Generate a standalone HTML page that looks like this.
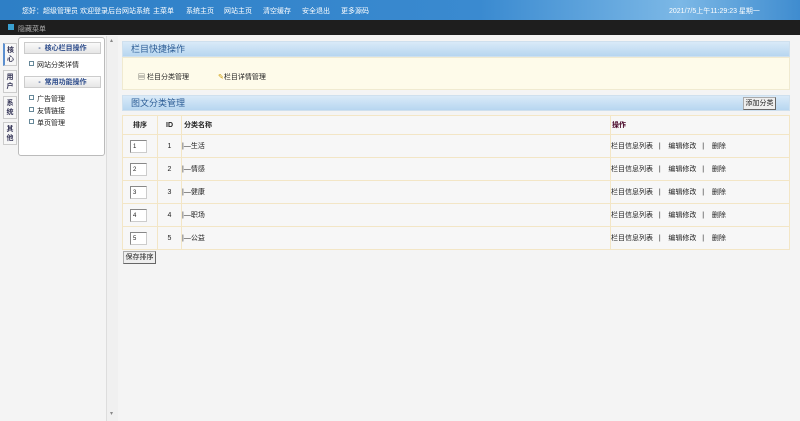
<!DOCTYPE html>
<html><head><meta charset="utf-8"><style>
*{margin:0;padding:0;box-sizing:border-box}
body{width:800px;height:421px;overflow:hidden;background:#f4f4f4;font-family:"Liberation Sans","Noto Sans CJK SC",sans-serif;font-size:7px;color:#222;position:relative}
.abs{position:absolute}
#top{left:0;top:0;width:800px;height:20px;background:linear-gradient(90deg,#2e7fc6 0%,#3a8ad0 60%,#7cb8e6 85%,#3f8ccf 100%);color:#fff}
#top span{position:absolute;top:6px;font-size:7px;white-space:nowrap}
#bar{left:0;top:20px;width:800px;height:15px;background:#1e1e1e;color:#aaa}
.tab{left:3px;width:14px;height:23px;background:#f7f7f7;border:1px solid #ccc;color:#335;font-size:7px;line-height:9px;text-align:center;padding-top:2px;font-weight:bold}
#menu{left:18px;top:37px;width:87px;height:119px;background:#fff;border:1px solid #bbb;border-radius:3px}
.mh{position:absolute;left:5px;width:77px;height:12px;background:linear-gradient(#fafafa,#e6e6e6);border:1px solid #ccc;color:#2b4a8a;font-weight:bold;text-align:center;line-height:11px}
.mi{position:absolute;left:10px;white-space:nowrap}
.mi:before{content:"";display:inline-block;width:3px;height:3px;border:1px solid #689;margin-right:3px;vertical-align:1px}
#scroll{left:106px;top:36px;width:12px;height:385px;background:#f0f0f0;border-left:1px solid #ddd}
.ph{left:122px;width:668px;height:16px;background:linear-gradient(#d9eaf8,#b7d6f0);border:1px solid #cfe0ee;color:#2b5c95;font-size:9px;line-height:15px;padding-left:8px}
table{position:absolute;left:122px;top:115px;width:668px;border-collapse:collapse;background:#f7f7f7}
td{border:1px solid #f3e6c6;height:23px;font-size:7px}
tr.h td{height:19px;font-weight:bold}
.in{display:inline-block;width:17px;height:13px;border:1px solid #888;border-right-color:#ccc;border-bottom-color:#ccc;background:#fff;font-size:6px;padding:3px 2px;vertical-align:middle}
.btn{background:#eee;border:1px solid #aaa;border-right-color:#666;border-bottom-color:#666;font-size:7px;text-align:center;line-height:11px}
</style></head><body>
<div id="top" class="abs">
<span style="left:22px">您好：超级管理员 欢迎登录后台网站系统</span>
<span style="left:153px">主菜单</span><span style="left:186px">系统主页</span><span style="left:224px">网站主页</span><span style="left:263px">清空缓存</span><span style="left:302px">安全退出</span><span style="left:341px">更多源码</span>
<span style="left:669px">2021/7/5上午11:29:23 星期一</span>
</div>
<div id="bar" class="abs"><div class="abs" style="left:8px;top:4px;width:6px;height:6px;background:#3aa0d0"></div><span class="abs" style="left:18px;top:4px;font-size:7px">隐藏菜单</span></div>
<div class="abs tab" style="top:43px;border-left:2px solid #5b8fd0">核<br>心</div>
<div class="abs tab" style="top:70px">用<br>户</div>
<div class="abs tab" style="top:96px">系<br>统</div>
<div class="abs tab" style="top:122px">其<br>他</div>
<div id="menu" class="abs">
<div class="mh" style="top:4px">- &nbsp;核心栏目操作</div>
<div class="mi" style="top:22px">网站分类详情</div>
<div class="mh" style="top:38px">- &nbsp;常用功能操作</div>
<div class="mi" style="top:56px">广告管理</div>
<div class="mi" style="top:68px">友情链接</div>
<div class="mi" style="top:80px">单页管理</div>
</div>
<div id="scroll" class="abs"><span class="abs" style="left:3px;top:1px;font-size:6px;color:#888">▴</span><span class="abs" style="left:3px;top:374px;font-size:6px;color:#888">▾</span></div>
<div class="abs ph" style="top:41px">栏目快捷操作</div>
<div class="abs" style="left:122px;top:57px;width:668px;height:33px;background:#fefbea;border:1px solid #f0ead0">
<span class="abs" style="left:15px;top:14px">▤ 栏目分类管理</span><span class="abs" style="left:95px;top:14px"><span style="color:#c90">✎</span>栏目详情管理</span></div>
<div class="abs ph" style="top:95px">图文分类管理</div>
<div class="abs btn" style="left:743px;top:97px;width:33px;height:13px">添加分类</div>
<table>
<tr class="h"><td style="width:35px;text-align:center">排序</td><td style="width:24px;text-align:center">ID</td><td style="width:429px;padding-left:2px">分类名称</td><td style="padding-left:1px;color:#402">操作</td></tr>
<tr><td style="padding-left:7px"><span class="in">1</span></td><td style="text-align:center">1</td><td>|—生活</td><td>栏目信息列表 &nbsp;&nbsp;| &nbsp;&nbsp;&nbsp;编辑修改 &nbsp;&nbsp;| &nbsp;&nbsp;&nbsp;删除</td></tr>
<tr><td style="padding-left:7px"><span class="in">2</span></td><td style="text-align:center">2</td><td>|—情感</td><td>栏目信息列表 &nbsp;&nbsp;| &nbsp;&nbsp;&nbsp;编辑修改 &nbsp;&nbsp;| &nbsp;&nbsp;&nbsp;删除</td></tr>
<tr><td style="padding-left:7px"><span class="in">3</span></td><td style="text-align:center">3</td><td>|—健康</td><td>栏目信息列表 &nbsp;&nbsp;| &nbsp;&nbsp;&nbsp;编辑修改 &nbsp;&nbsp;| &nbsp;&nbsp;&nbsp;删除</td></tr>
<tr><td style="padding-left:7px"><span class="in">4</span></td><td style="text-align:center">4</td><td>|—职场</td><td>栏目信息列表 &nbsp;&nbsp;| &nbsp;&nbsp;&nbsp;编辑修改 &nbsp;&nbsp;| &nbsp;&nbsp;&nbsp;删除</td></tr>
<tr><td style="padding-left:7px"><span class="in">5</span></td><td style="text-align:center">5</td><td>|—公益</td><td>栏目信息列表 &nbsp;&nbsp;| &nbsp;&nbsp;&nbsp;编辑修改 &nbsp;&nbsp;| &nbsp;&nbsp;&nbsp;删除</td></tr>
</table>
<div class="abs btn" style="left:123px;top:251px;width:33px;height:13px">保存排序</div>
</body></html>
